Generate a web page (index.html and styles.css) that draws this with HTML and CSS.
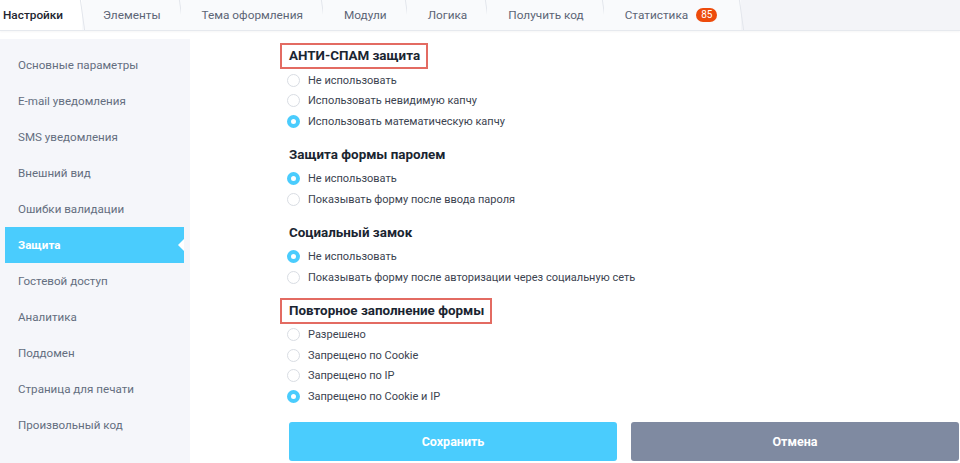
FILE: index.html
```html
<!DOCTYPE html>
<html lang="ru">
<head>
<meta charset="UTF-8" />
<title>Настройки формы</title>
<link rel="stylesheet" href="styles.css">
</head>
<body>

<div class="tabs">
  <div class="tab active">Настройки</div>
  <div class="tab">Элементы</div>
  <div class="tab">Тема оформления</div>
  <div class="tab">Модули</div>
  <div class="tab">Логика</div>
  <div class="tab">Получить код</div>
  <div class="tab last">Статистика <span class="badge">85</span></div>
</div>

<div class="layout">
  <ul class="sidebar">
    <li>Основные параметры</li>
    <li>E-mail уведомления</li>
    <li>SMS уведомления</li>
    <li>Внешний вид</li>
    <li>Ошибки валидации</li>
    <li class="current">Защита</li>
    <li>Гостевой доступ</li>
    <li>Аналитика</li>
    <li>Поддомен</li>
    <li>Страница для печати</li>
    <li>Произвольный код</li>
  </ul>

  <div class="main">
    <div class="section">
      <h3 class="boxed">АНТИ-СПАМ защита</h3>
      <label class="radio"><span class="dot"></span>Не использовать</label>
      <label class="radio"><span class="dot"></span>Использовать невидимую капчу</label>
      <label class="radio"><span class="dot on"></span>Использовать математическую капчу</label>
    </div>

    <div class="section">
      <h3>Защита формы паролем</h3>
      <label class="radio"><span class="dot on"></span>Не использовать</label>
      <label class="radio"><span class="dot"></span>Показывать форму после ввода пароля</label>
    </div>

    <div class="section">
      <h3>Социальный замок</h3>
      <label class="radio"><span class="dot on"></span>Не использовать</label>
      <label class="radio"><span class="dot"></span>Показывать форму после авторизации через социальную сеть</label>
    </div>

    <div class="section">
      <h3 class="boxed">Повторное заполнение формы</h3>
      <label class="radio"><span class="dot"></span>Разрешено</label>
      <label class="radio"><span class="dot"></span>Запрещено по Cookie</label>
      <label class="radio"><span class="dot"></span>Запрещено по IP</label>
      <label class="radio"><span class="dot on"></span>Запрещено по Cookie и IP</label>
    </div>

    <div class="buttons">
      <button class="save">Сохранить</button>
      <button class="cancel">Отмена</button>
    </div>
  </div>
</div>

</body>
</html>
```

FILE: styles.css
```css
body {
  margin: 0;
  font-family: Roboto, "Liberation Sans", sans-serif;
  font-size: 12px;
  color: #333;
  background: #fff;
  overflow: hidden;
}

/* tabs */
.tabs {
  display: flex;
  height: 30px;
  background: #f3f4f8;
  border-bottom: 1px solid #e6e9ee;
  box-shadow: 0 1px 2px rgba(0,0,0,0.04);
}
.tab {
  position: relative;
  display: flex;
  align-items: center;
  padding: 0 20px 0 21px;
  color: #5c6576;
  background: #f9fafc;
  font-size: 11.8px;
}
.tab::after {
  content: "";
  position: absolute;
  top: 0; bottom: 0; right: -1px;
  border-right: 1px solid #e3e6ec;
  transform: skewX(8deg);
}
.tab.active {
  width: 62px;
  padding: 0 17px 0 3px;
  background: #fff;
  color: #1e2530;
  font-weight: 500;
  z-index: 1;
}
.tab.last {
  padding-right: 24px;
}
.badge {
  display: inline-block;
  margin-left: 8px;
  padding: 0 5px;
  height: 14px;
  line-height: 14px;
  border-radius: 7px;
  background: #ed4b0c;
  color: #fff;
  font-size: 10px;
}

.layout {
  display: flex;
  margin-top: 8px;
}

/* left menu */
.sidebar {
  list-style: none;
  margin: 0;
  padding: 8px 6px 20px 5px;
  width: 179px;
  background: #f5f6fa;
}
.sidebar li {
  height: 36px;
  line-height: 36px;
  padding-left: 13px;
  color: #646e7f;
  font-size: 11.6px;
}
.sidebar li.current {
  position: relative;
  background: #4accfd;
  color: #fff;
  font-weight: bold;
}
.sidebar li.current::after {
  content: "";
  position: absolute;
  right: 0;
  top: 12px;
  border: 6px solid transparent;
  border-right-color: #fff;
}

/* content */
.main {
  padding: 4px 0 0 90px;
  flex: 1;
}
.section {
  margin-bottom: 10px;
}
.section h3 {
  width: fit-content;
  margin: 0 0 1px;
  padding: 0 6px 0 7px;
  height: 22px;
  line-height: 22px;
  border: 2px solid transparent;
  font-size: 13.4px;
  font-weight: bold;
  color: #1a2531;
}
.section h3.boxed {
  border-color: #e36b62;
}
.radio {
  display: flex;
  align-items: center;
  height: 20.5px;
  padding-left: 7px;
  color: #3b4350;
  font-size: 11px;
}
.dot {
  box-sizing: border-box;
  width: 13px;
  height: 13px;
  margin-right: 8px;
  border-radius: 50%;
  border: 1px solid #d9dde3;
  background: #fff;
}
.dot.on {
  border: 4px solid #4accfd;
  background: #fff;
}

.buttons {
  display: grid;
  grid-template-columns: 328px 328px;
  gap: 14px;
  margin: 15px 0 0 9px;
}
.buttons button {
  height: 39px;
  border: none;
  border-radius: 3px;
  color: #fff;
  font-family: Roboto, "Liberation Sans", sans-serif;
  font-size: 12.5px;
  font-weight: bold;
}
.save { background: #4accfd; }
.cancel { background: #7f8aa1; }
```
